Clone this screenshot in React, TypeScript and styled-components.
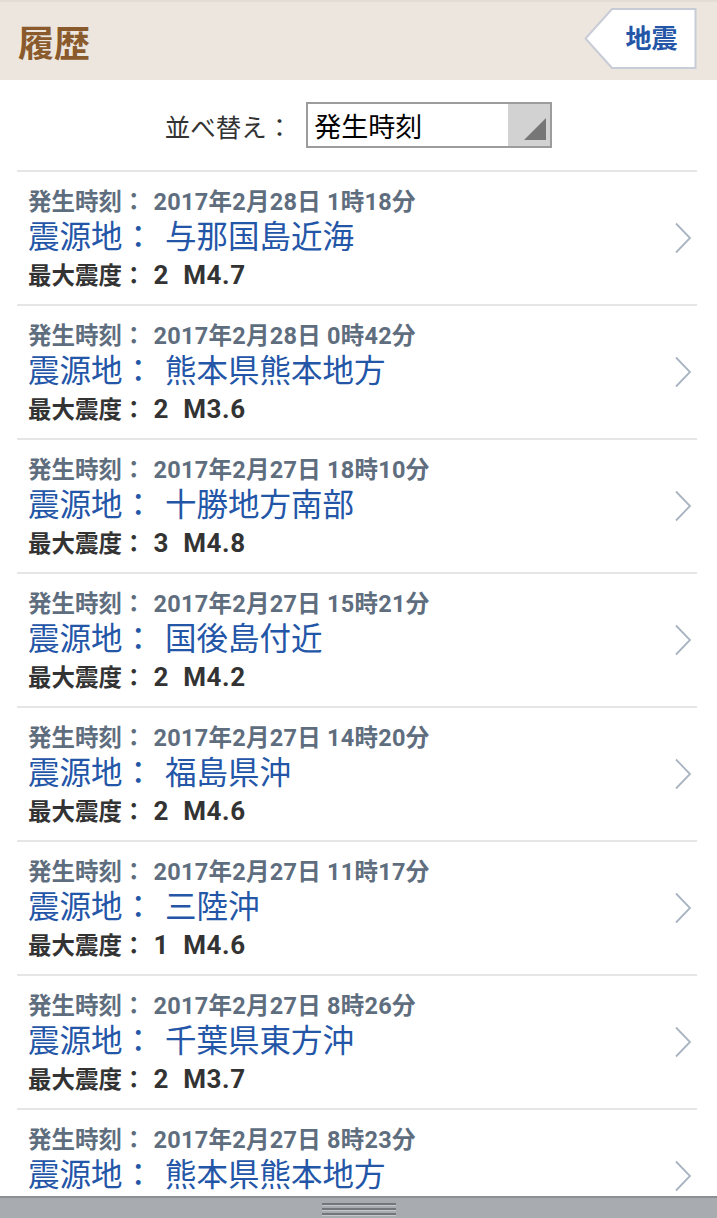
import React from "react";
import styled, { createGlobalStyle } from "styled-components";

const Global = createGlobalStyle`
  html, body { margin: 0; padding: 0; background: #ffffff; }
  body { font-family: Roboto, "Noto Sans CJK JP", "Noto Sans", sans-serif; }
`;

const Page = styled.div`
  width: 717px;
  height: 1218px;
  display: flex;
  flex-direction: column;
  overflow: hidden;
  background: #ffffff;
`;

const Header = styled.header`
  height: 80px;
  flex: none;
  display: flex;
  align-items: center;
  justify-content: space-between;
  padding: 0 20px 0 18px;
  background: #ede6df;
  border-top: 2px solid #e4ddd5;
  box-sizing: border-box;
`;

const Title = styled.h1`
  margin: 0;
  font-size: 36px;
  font-weight: 700;
  color: #8a5a2c;
  font-family: "Noto Sans CJK JP", sans-serif;
`;

const BackButton = styled.button`
  position: relative;
  width: 113px;
  height: 61px;
  margin-top: -6px;
  padding: 0 0 4px 22px;
  border: none;
  background: transparent;
  font-family: "Noto Sans CJK JP", sans-serif;
  font-size: 26px;
  font-weight: 700;
  color: #2456a8;
  display: flex;
  align-items: center;
  justify-content: center;
`;

const ButtonShape = styled.svg`
  position: absolute;
  inset: 0;
  z-index: 0;
`;

const ButtonLabel = styled.span`
  position: relative;
  z-index: 1;
`;

const SortRow = styled.div`
  height: 90px;
  flex: none;
  display: flex;
  align-items: center;
  justify-content: center;
  gap: 14px;
`;

const SortLabel = styled.span`
  font-family: "Noto Sans CJK JP", sans-serif;
  font-size: 25.5px;
  color: #333333;
`;

const Select = styled.div`
  width: 246px;
  height: 46px;
  box-sizing: border-box;
  border: 2px solid #9c9c9c;
  display: flex;
  align-items: stretch;
`;

const SelectValue = styled.span`
  flex: 1;
  display: flex;
  align-items: center;
  padding-left: 6px;
  font-family: "Noto Sans CJK JP", sans-serif;
  font-size: 27px;
  color: #000000;
`;

const SelectArrow = styled.span`
  width: 42px;
  background: #d2d2d2;
  display: flex;
  align-items: flex-end;
  justify-content: flex-end;
  padding: 0 4px 6px 0;
  box-sizing: border-box;
`;

const List = styled.ul`
  flex: 1;
  margin: 0 20px 0 17px;
  padding: 0;
  list-style: none;
  overflow: hidden;
`;

const Item = styled.li`
  height: 134px;
  box-sizing: border-box;
  border-top: 2px solid #e6e6e6;
  display: flex;
  align-items: center;
  padding: 0 5px 0 11px;
`;

const ItemBody = styled.div`
  flex: 1;
  display: flex;
  flex-direction: column;
  align-self: flex-start;
  padding-top: 17px;
`;

const TimeLine = styled.div`
  font-size: 23.5px;
  line-height: 26px;
  font-weight: 700;
  color: #5f6e7e;
  white-space: nowrap;
`;

const PlaceLine = styled.div`
  font-family: "Noto Sans CJK JP", sans-serif;
  font-size: 31.5px;
  line-height: 38px;
  color: #2456a8;
  white-space: nowrap;
`;

const IntensityLine = styled.div`
  margin-top: 8px;
  font-size: 23.5px;
  line-height: 28px;
  font-weight: 700;
  color: #333333;
  white-space: pre;
`;

const Value = styled.span<{ $size?: number; $spacing?: number; $offset: number }>`
  margin-left: ${(p) => p.$offset}px;
  font-size: ${(p) => (p.$size ? `${p.$size}px` : "inherit")};
  letter-spacing: ${(p) => p.$spacing ?? 0}px;
`;

const Chevron = styled.svg`
  flex: none;
`;

const BottomBar = styled.div`
  height: 22px;
  flex: none;
  background: #a8abb0;
  border-top: 2px solid #8b8e92;
  box-sizing: border-box;
  display: flex;
  justify-content: center;
  padding-top: 5px;
`;

const Handle = styled.div`
  width: 74px;
  height: 12px;
  display: flex;
  flex-direction: column;
  justify-content: space-between;
`;

const HandleLine = styled.span`
  display: block;
  height: 2px;
  background: #73767b;
  box-shadow: 0 1px 0 #c4c7cb;
`;

const quakes = [
  { time: "2017年2月28日 1時18分", place: "与那国島近海", shindo: "2", mag: "M4.7" },
  { time: "2017年2月28日 0時42分", place: "熊本県熊本地方", shindo: "2", mag: "M3.6" },
  { time: "2017年2月27日 18時10分", place: "十勝地方南部", shindo: "3", mag: "M4.8" },
  { time: "2017年2月27日 15時21分", place: "国後島付近", shindo: "2", mag: "M4.2" },
  { time: "2017年2月27日 14時20分", place: "福島県沖", shindo: "2", mag: "M4.6" },
  { time: "2017年2月27日 11時17分", place: "三陸沖", shindo: "1", mag: "M4.6" },
  { time: "2017年2月27日 8時26分", place: "千葉県東方沖", shindo: "2", mag: "M3.7" },
  { time: "2017年2月27日 8時23分", place: "熊本県熊本地方", shindo: "2", mag: "M3.3" },
];

export default function App() {
  return (
    <Page>
      <Global />
      <Header>
        <Title>履歴</Title>
        <BackButton>
          <ButtonShape width="113" height="61" viewBox="0 0 113 61">
            <path
              d="M28 1 H111.5 V60 H28 L1.5 30.5 Z"
              fill="#ffffff"
              stroke="#c8ccd6"
              strokeWidth="2"
            />
          </ButtonShape>
          <ButtonLabel>地震</ButtonLabel>
        </BackButton>
      </Header>
      <SortRow>
        <SortLabel>並べ替え：</SortLabel>
        <Select>
          <SelectValue>発生時刻</SelectValue>
          <SelectArrow>
            <svg width="22" height="22" viewBox="0 0 22 22">
              <polygon points="0,22 22,22 22,0" fill="#767676" />
            </svg>
          </SelectArrow>
        </Select>
      </SortRow>
      <List>
        {quakes.map((q, i) => (
          <Item key={i}>
            <ItemBody>
              <TimeLine>
                発生時刻：<Value $offset={8} $spacing={0.25}>{q.time}</Value>
              </TimeLine>
              <PlaceLine>
                震源地：<Value $offset={11}>{q.place}</Value>
              </PlaceLine>
              <IntensityLine>
                最大震度：<Value $offset={8} $size={26} $spacing={0.6}>
                  {q.shindo}  {q.mag}
                </Value>
              </IntensityLine>
            </ItemBody>
            <Chevron width="18" height="32" viewBox="0 0 18 32">
              <polyline
                points="2,1.5 16,16 2,30.5"
                fill="none"
                stroke="#a9b4c2"
                strokeWidth="1.8"
              />
            </Chevron>
          </Item>
        ))}
      </List>
      <BottomBar>
        <Handle>
          <HandleLine />
          <HandleLine />
          <HandleLine />
        </Handle>
      </BottomBar>
    </Page>
  );
}
